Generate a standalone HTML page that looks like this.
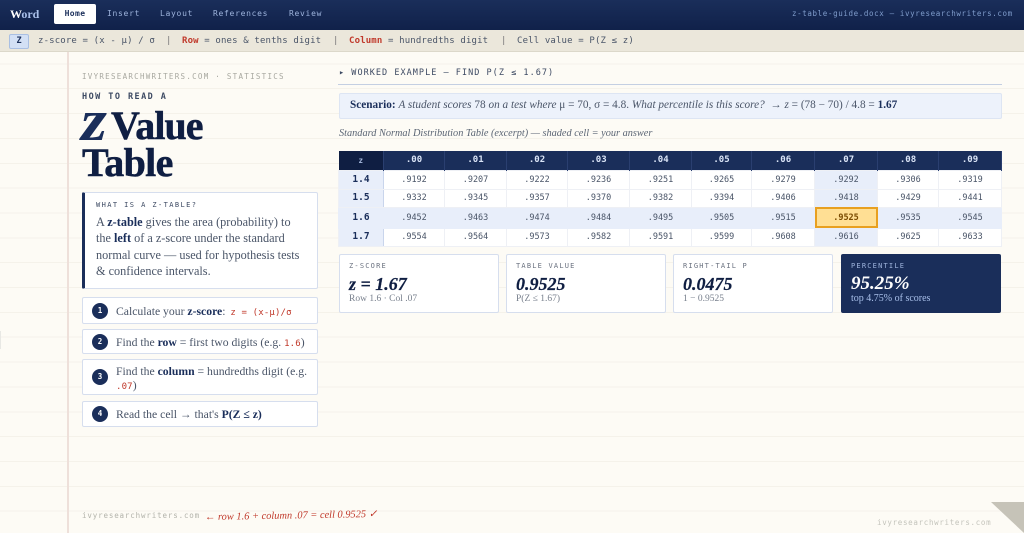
<!DOCTYPE html>
<html><head><meta charset="utf-8"><style>
*{box-sizing:border-box;margin:0;padding:0}
html,body{width:1024px;height:533px;overflow:hidden;background:#fdfbf5}
body{position:relative;font-family:"Liberation Serif",serif;color:#1a2e5a}
.a{position:absolute;white-space:nowrap}
.m{font-family:"DejaVu Sans Mono","Liberation Mono",monospace}
.lines{position:absolute;left:0;top:52px;width:1024px;height:481px;background:repeating-linear-gradient(to bottom,transparent 0,transparent 11.35px,#f5f2ea 11.35px,#f5f2ea 12.35px,transparent 12.35px,transparent 24.85px)}
.top{position:absolute;left:0;top:0;width:1024px;height:30px;background:linear-gradient(180deg,#1a2e5a,#10214a)}
.bar{position:absolute;left:0;top:30px;width:1024px;height:22px;background:#ebe7db;border-bottom:1px solid #dcd8ca}
.tab{position:absolute;top:9px;font:8px/10px "DejaVu Sans Mono",monospace;letter-spacing:.7px;color:#9db3dc}
.box{position:absolute;background:#fff;border:1px solid #d6deee;border-radius:2px}
.t{font-size:9px;line-height:12px;letter-spacing:.15px;color:#4a5568;top:35px}
.step{left:82px;width:236px;font-size:11.7px;color:#4a5568}
.num{position:absolute;left:9px;width:16px;height:16px;border-radius:50%;background:#1a2e5a;color:#fff;font:bold 7.5px/16px "DejaVu Sans Mono",monospace;text-align:center}
.step b{color:#1a2e5a}
.step code{font-family:"DejaVu Sans Mono",monospace;font-size:9px;letter-spacing:.15px;color:#c0392b}
table{position:absolute;left:338px;top:151px;width:663px;border-collapse:collapse;table-layout:fixed;font:8.5px "DejaVu Sans Mono",monospace;color:#4a5568;text-align:center}
th{background:#1a2e5a;color:#dbe5f7;font-weight:bold;font-size:9px;height:19px;border-right:1px solid #2a3f70;padding:0}
th:first-child{background:#0f1e42;font-size:7.5px;color:#a9bce0}
td{border:1px solid #eef0f5;background:#fff;padding:0;line-height:10px}
td:first-child{background:#e8eefa;color:#1a2e5a;font-weight:bold;font-size:9.5px;border-right:1px solid #c9d5ec}
.hr td{background:#e8eefa;border-color:#e8eefa}
.hc{background:#e8eefa!important}
.ans{background:#ffdf94!important;outline:2px solid #e8a020;outline-offset:-2px;color:#7a4b00;font-weight:bold}
.card{top:254px;height:59px;width:160px}
.lab{position:absolute;left:9px;top:7px;font:7px/9px "DejaVu Sans Mono",monospace;letter-spacing:1.2px;color:#6b7280;white-space:nowrap}
.val{position:absolute;left:9px;top:18px;font:italic bold 18px/22px "Liberation Serif",serif;color:#0f1e42;white-space:nowrap;-webkit-text-stroke:.2px #0f1e42}
.sub{position:absolute;left:9px;top:38px;font:9.5px/12px "Liberation Serif",serif;color:#777f8c;white-space:nowrap}
</style></head><body>
<div class="lines"></div>
<div class="a" style="left:67px;top:52px;width:2px;height:481px;background:#eee0da"></div>
<div class="a" style="left:0;top:331px;width:1px;height:18px;background:#e8e8e4"></div>

<div class="top"></div>
<div class="a" style="left:10px;top:6px;font:bold 12px/16px 'Liberation Serif',serif;color:#fff">W<span style="color:#a9c0ea">ord</span></div>
<div class="a" style="left:54px;top:4px;width:42px;height:20px;background:#fff;border-radius:2px;text-align:center;font:bold 8px/19px 'DejaVu Sans Mono',monospace;color:#1a2e5a;letter-spacing:.4px">Home</div>
<div class="tab" style="left:107px">Insert</div>
<div class="tab" style="left:160px">Layout</div>
<div class="tab" style="left:213px">References</div>
<div class="tab" style="left:289px">Review</div>
<div class="a m" style="left:792px;top:9px;font-size:7.5px;line-height:10px;letter-spacing:.62px;color:#7f9ccb">z-table-guide.docx — ivyresearchwriters.com</div>

<div class="bar"></div>
<div class="a" style="left:9px;top:34px;width:20px;height:15px;background:#d3e0f5;border:1px solid #a9bfe3;border-radius:2px;text-align:center;font:bold 8.5px/13px 'DejaVu Sans Mono',monospace;color:#1a2e5a">Z</div>
<div class="a m t" style="left:38px">z-score = (x - μ) / σ</div>
<div class="a m t" style="left:166px;color:#777">|</div>
<div class="a m t" style="left:182px"><b style="color:#c0392b">Row</b> = ones &amp; tenths digit</div>
<div class="a m t" style="left:333px;color:#777">|</div>
<div class="a m t" style="left:349px"><b style="color:#c0392b">Column</b> = hundredths digit</div>
<div class="a m t" style="left:501px;color:#777">|</div>
<div class="a m t" style="left:517px">Cell value = P(Z ≤ z)</div>

<div class="a m" style="left:82px;top:72px;font-size:7.5px;line-height:10px;letter-spacing:1.28px;color:#a8a8a0">IVYRESEARCHWRITERS.COM · STATISTICS</div>
<div class="a m" style="left:82px;top:92px;font-size:8.5px;line-height:11px;font-weight:bold;letter-spacing:1.45px;color:#3d4a63">HOW TO READ A</div>
<div class="a" style="left:81px;top:92px;font:italic bold 58px/58px 'Liberation Serif',serif;color:#1a2e5a;transform:scaleX(1.15);transform-origin:0 0">z</div>
<div class="a" style="left:111px;top:105px;font:bold 40px/41px 'Liberation Serif',serif;letter-spacing:-.95px;color:#0f1e42;-webkit-text-stroke:.5px #0f1e42">Value</div>
<div class="a" style="left:82px;top:142px;font:bold 40px/41px 'Liberation Serif',serif;letter-spacing:-.7px;color:#0f1e42;-webkit-text-stroke:.5px #0f1e42">Table</div>

<div class="box" style="left:82px;top:192px;width:236px;height:97px;border-left:3px solid #1a2e5a"></div>
<div class="a m" style="left:96px;top:200px;font-size:7px;line-height:10px;letter-spacing:1.42px;color:#3d4a63">WHAT IS A Z-TABLE?</div>
<div class="a" style="left:96px;top:213.5px;font-size:12.25px;line-height:16.6px;color:#4a5568">A <b style="color:#1a2e5a">z-table</b> gives the area (probability) to<br>the <b style="color:#1a2e5a">left</b> of a z-score under the standard<br>normal curve — used for hypothesis tests<br>&amp; confidence intervals.</div>

<div class="box a step" style="top:297px;height:27px"><span class="num" style="top:5px">1</span><span class="a" style="left:33px;top:7px">Calculate your <b>z-score</b>: <code style="margin-left:2px">z = (x-μ)/σ</code></span></div>
<div class="box a step" style="top:329px;height:25px"><span class="num" style="top:4px">2</span><span class="a" style="left:33px;top:6px">Find the <b>row</b> = first two digits (e.g. <code>1.6</code>)</span></div>
<div class="box a step" style="top:359px;height:36px"><span class="num" style="top:9px">3</span><span class="a" style="left:33px;top:5px;line-height:14px">Find the <b>column</b> = hundredths digit (e.g.<br><code>.07</code>)</span></div>
<div class="box a step" style="top:401px;height:26px"><span class="num" style="top:4px">4</span><span class="a" style="left:33px;top:6px">Read the cell → that's <b>P(Z ≤ z)</b></span></div>

<div class="a m" style="left:82px;top:511px;font-size:7.5px;line-height:10px;letter-spacing:.85px;color:#b3b3ab">ivyresearchwriters.com</div>
<div class="a" style="left:205px;top:511px;font:italic 10.4px/14px 'Liberation Serif',serif;color:#c0392b;transform:rotate(-1deg);transform-origin:0 50%">← row 1.6 + column .07 = cell 0.9525 ✓</div>
<div class="a m" style="left:877px;top:518px;font-size:7.5px;line-height:10px;letter-spacing:.68px;color:#c4c4bc">ivyresearchwriters.com</div>
<svg class="a" style="left:990px;top:502px" width="34" height="31"><path d="M1 0H34V31Z" fill="#c6c3b8"/></svg>

<div class="a m" style="left:339px;top:68px;font-size:8.5px;line-height:11px;letter-spacing:1.03px;color:#3d4a63">▸ WORKED EXAMPLE — FIND P(Z ≤ 1.67)</div>
<div class="a" style="left:338px;top:84px;width:664px;height:1px;background:#c4cfe2"></div>
<div class="a" style="left:339px;top:93px;width:663px;height:26px;background:#edf2fb;border:1px solid #dde5f3;border-radius:2px"></div>
<div class="a" style="left:350px;top:98px;font-size:11.25px;line-height:15px;color:#4a5568"><b style="color:#1a2e5a">Scenario:</b> <i>A student scores</i> 78 <i>on a test where</i> μ = 70, σ = 4.8. <i>What percentile is this score?</i> &nbsp;→ <i>z</i> = (78 − 70) / 4.8 = <b style="color:#1a2e5a">1.67</b></div>
<div class="a" style="left:339px;top:127px;font:italic 10.3px/13px 'Liberation Serif',serif;color:#5c6675">Standard Normal Distribution Table (excerpt) — shaded cell = your answer</div>

<table>
<colgroup><col style="width:45px"><col style="width:61px"><col style="width:62px"><col style="width:61px"><col style="width:62px"><col style="width:62px"><col style="width:60px"><col style="width:63px"><col style="width:63px"><col style="width:61px"><col style="width:63px"></colgroup>
<tr style="height:19px"><th>z</th><th>.00</th><th>.01</th><th>.02</th><th>.03</th><th>.04</th><th>.05</th><th>.06</th><th>.07</th><th>.08</th><th>.09</th></tr>
<tr style="height:19px"><td>1.4</td><td>.9192</td><td>.9207</td><td>.9222</td><td>.9236</td><td>.9251</td><td>.9265</td><td>.9279</td><td class="hc">.9292</td><td>.9306</td><td>.9319</td></tr>
<tr style="height:18px"><td>1.5</td><td>.9332</td><td>.9345</td><td>.9357</td><td>.9370</td><td>.9382</td><td>.9394</td><td>.9406</td><td class="hc">.9418</td><td>.9429</td><td>.9441</td></tr>
<tr class="hr" style="height:21px"><td>1.6</td><td>.9452</td><td>.9463</td><td>.9474</td><td>.9484</td><td>.9495</td><td>.9505</td><td>.9515</td><td class="ans">.9525</td><td>.9535</td><td>.9545</td></tr>
<tr style="height:18px"><td>1.7</td><td>.9554</td><td>.9564</td><td>.9573</td><td>.9582</td><td>.9591</td><td>.9599</td><td>.9608</td><td class="hc">.9616</td><td>.9625</td><td>.9633</td></tr>
</table>

<div class="box card" style="left:339px"><div class="lab">Z-SCORE</div><div class="val">z = 1.67</div><div class="sub">Row 1.6 · Col .07</div></div>
<div class="box card" style="left:506px"><div class="lab">TABLE VALUE</div><div class="val">0.9525</div><div class="sub">P(Z ≤ 1.67)</div></div>
<div class="box card" style="left:673px"><div class="lab">RIGHT-TAIL P</div><div class="val">0.0475</div><div class="sub">1 − 0.9525</div></div>
<div class="box card" style="left:841px;background:#1a2e5a;border-color:#1a2e5a"><div class="lab" style="color:#9db3dc">PERCENTILE</div><div class="val" style="color:#fff;font-size:19px;-webkit-text-stroke:0">95.25%</div><div class="sub" style="color:#a9c0ea;font-size:10px">top 4.75% of scores</div></div>
</body></html>
